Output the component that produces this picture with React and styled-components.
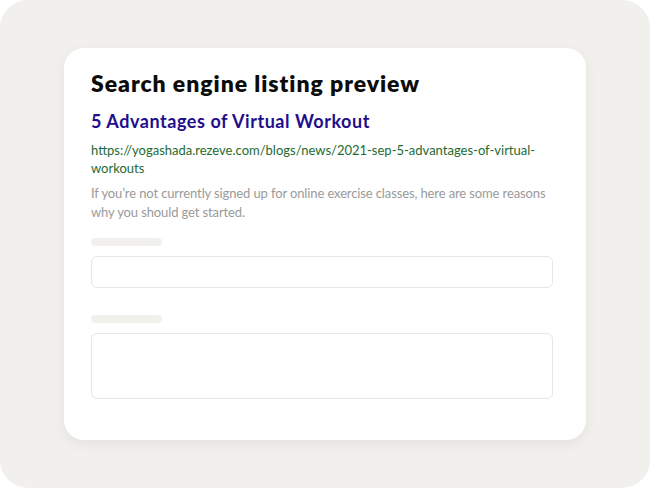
import React from "react";
import styled, { createGlobalStyle } from "styled-components";

const GlobalStyle = createGlobalStyle`
  html, body {
    margin: 0;
    padding: 0;
    background: #ffffff;
  }
  * { box-sizing: border-box; }
`;

const Frame = styled.div`
  width: 650px;
  height: 488px;
  background: #f1f0ed;
  border-radius: 28px;
  padding: 48px 64px 48px 64px;
  font-family: "Lato", "Open Sans", sans-serif;
`;

const Card = styled.div`
  width: 522px;
  height: 392px;
  background: #ffffff;
  border-radius: 20px;
  box-shadow: 0 4px 14px rgba(0, 0, 0, 0.06);
  padding: 20px 33px 0 27px;
  display: flex;
  flex-direction: column;
`;

const Heading = styled.h1`
  margin: 0;
  font-size: 23px;
  line-height: 30px;
  font-weight: 800;
  color: #0c0c0c;
  letter-spacing: 0.95px;
`;

const ResultTitle = styled.div`
  margin-top: 11px;
  font-size: 18px;
  line-height: 24px;
  font-weight: 700;
  color: #1f0f8c;
  letter-spacing: 0.55px;
`;

const ResultUrl = styled.div`
  margin-top: 8px;
  font-size: 13px;
  line-height: 18px;
  color: #1e6a33;
  word-break: break-word;
`;

const ResultDesc = styled.div`
  margin-top: 7px;
  font-size: 13px;
  line-height: 19px;
  color: #9a9a9a;
  letter-spacing: -0.12px;
`;

const Field = styled.div`
  margin-top: ${p => p.$gap}px;
  display: flex;
  flex-direction: column;
  gap: 10px;
`;

const LabelBar = styled.div`
  width: 71px;
  height: 8px;
  border-radius: 4px;
  background: #f1f0ed;
`;

const InputBox = styled.div`
  height: ${p => p.$h}px;
  border: 1px solid #e6e6e6;
  border-radius: 6px;
  background: #ffffff;
`;

export default function App() {
  return (
    <>
      <GlobalStyle />
      <Frame>
        <Card>
          <Heading>Search engine listing preview</Heading>
          <ResultTitle>5 Advantages of Virtual Workout</ResultTitle>
          <ResultUrl>
            https://yogashada.rezeve.com/blogs/news/2021-sep-5-advantages-of-virtual-workouts
          </ResultUrl>
          <ResultDesc>
            If you’re not currently signed up for online exercise classes, here
            are some reasons why you should get started.
          </ResultDesc>
          <Field $gap={16}>
            <LabelBar />
            <InputBox $h={32} />
          </Field>
          <Field $gap={27}>
            <LabelBar />
            <InputBox $h={66} />
          </Field>
        </Card>
      </Frame>
    </>
  );
}
